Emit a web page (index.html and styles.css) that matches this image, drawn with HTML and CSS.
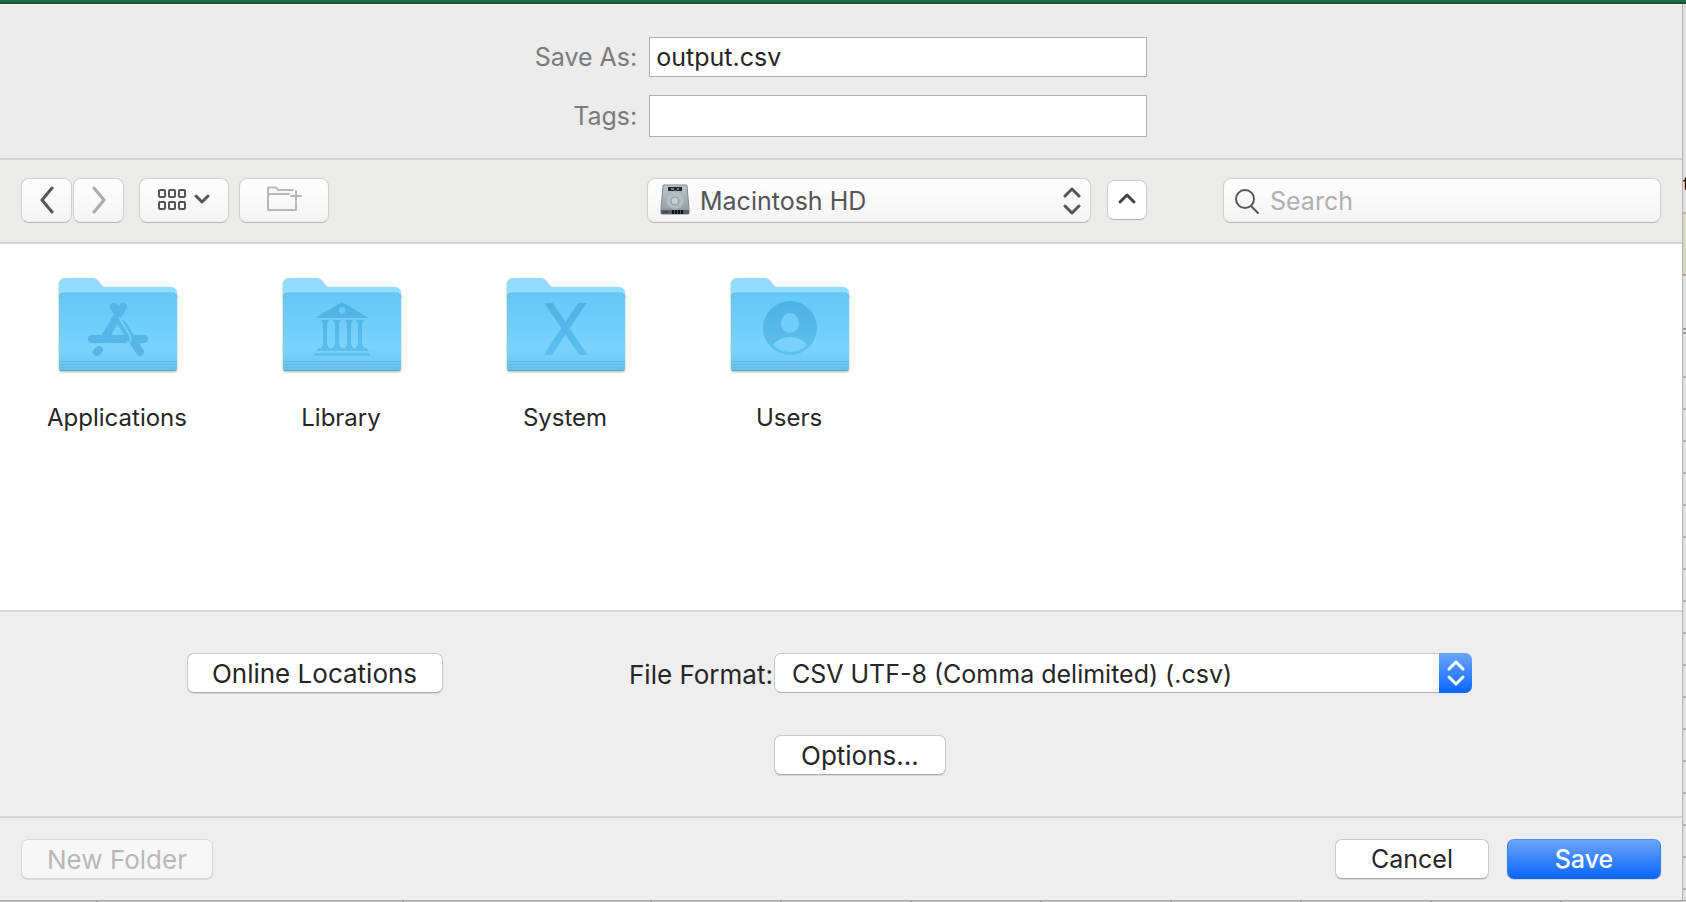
FILE: index.html
```html
<!DOCTYPE html>
<html lang="en">
<head>
    <meta charset="UTF-8">
    <meta name="viewport" content="width=device-width, initial-scale=1.0">
    <title>Save As</title>
    <link rel="stylesheet" href="styles.css">
</head>
<body>

<!-- shared folder shape -->
<svg class="defs" width="0" height="0" aria-hidden="true">
    <defs>
        <linearGradient id="front" x1="0" y1="0" x2="0" y2="1">
            <stop offset="0" stop-color="#66c8f7"/>
            <stop offset="0.25" stop-color="#6acbf9"/>
            <stop offset="0.7" stop-color="#7ad3fd"/>
            <stop offset="0.85" stop-color="#74cdf8"/>
            <stop offset="1" stop-color="#66bfea"/>
        </linearGradient>
        <linearGradient id="glyph" x1="0" y1="0" x2="0" y2="1">
            <stop offset="0" stop-color="#4db1e3"/>
            <stop offset="1" stop-color="#5fc0ee"/>
        </linearGradient>
        <linearGradient id="metal" x1="0" y1="0" x2="0" y2="1">
            <stop offset="0" stop-color="#b9c8cf"/>
            <stop offset="1" stop-color="#8f979a"/>
        </linearGradient>
        <symbol id="folder" viewBox="0 0 120 98">
            <path d="M1 7a6 6 0 0 1 6-6h27c4 0 6 2 8 5 2 3 3 4 6 4h65a6 6 0 0 1 6 6v20H1z" fill="#94dcfd"/>
            <path d="M1 21a5 5 0 0 1 5-5h108a5 5 0 0 1 5 5v70a3 3 0 0 1-3 3H4a3 3 0 0 1-3-3z" fill="url(#front)"/>
            <path d="M1 20a5 5 0 0 1 5-4h108a5 5 0 0 1 5 4" fill="none" stroke="#5fbce9"/>
            <path d="M1 84.500h118M1 87.500h118M1 90.500h118" stroke="#62bbe6"/>
            <path d="M2 93.500h116" stroke="#54a9d6"/>
        </symbol>
    </defs>
</svg>

<div class="workbook">
    <div class="titlebar"></div>

    <form class="dialog" onsubmit="return false">
        <div class="fields">
            <label for="save-as">Save As:</label>
            <input type="text" id="save-as" class="save-as" value="output.csv">
            <label for="tags">Tags:</label>
            <input type="text" id="tags" class="tags">
        </div>

        <div class="toolbar">
            <div class="tools">
                <button type="button" class="tool nav" aria-label="Back">
                    <svg width="16" height="28" viewBox="0 0 16 28"><path d="M13 2L3 14l10 12" stroke="#555" stroke-width="3"/></svg>
                </button>
                <button type="button" class="tool nav" aria-label="Forward">
                    <svg width="16" height="28" viewBox="0 0 16 28"><path d="M3 2l10 12L3 26" stroke="#aaa" stroke-width="3"/></svg>
                </button>
                <button type="button" class="tool view" aria-label="View">
                    <svg width="54" height="24" viewBox="0 0 54 24">
                        <g stroke="#555" stroke-width="2">
                            <rect x="2" y="2" width="6" height="7" rx="1"/><rect x="12" y="2" width="6" height="7" rx="1"/><rect x="22" y="2" width="6" height="7" rx="1"/>
                            <rect x="2" y="14" width="6" height="7" rx="1"/><rect x="12" y="14" width="6" height="7" rx="1"/><rect x="22" y="14" width="6" height="7" rx="1"/>
                        </g>
                        <path d="M39 8l6 6 6-6" stroke="#555" stroke-width="3"/>
                    </svg>
                </button>
                <button type="button" class="tool make" aria-label="New folder here">
                    <svg width="36" height="26" viewBox="0 0 36 26">
                        <path d="M27 4H12L10 1.500H2V24h28v-7M2 10q0-2 3-2h18M30 5v10M25 10h10" stroke="#b8b8b8" stroke-width="2"/>
                    </svg>
                </button>
            </div>

            <div class="location">
                <div class="place">
                    <svg class="disk" width="32" height="34" viewBox="0 0 32 34" aria-hidden="true">
                        <path d="M4 3q0-1 1-1h22q1 0 1 1l2 23v4q0 1-1 1H3q-1 0-1-1v-4z" fill="url(#metal)" stroke="#7d868a"/>
                        <path d="M9 4h14v4H9z" fill="#25292b"/>
                        <path d="M12 6h3M18 6h2" stroke="#c6d5dc"/>
                        <circle cx="16" cy="17" r="9" fill="#b4bdc1" stroke="#a4aeb2"/>
                        <circle cx="16" cy="18" r="4" fill="#c6ced1" stroke="#8e989c"/>
                        <path d="M2 27h28v4H2z" fill="#5b5f61"/>
                        <path d="M14 27v4M17 27v4M20 27v4M23 27v4" stroke="#111" stroke-width="2"/>
                        <path d="M4 29h5" stroke="#333"/>
                    </svg>
                    <select class="place-select" aria-label="Location"><option>Macintosh HD</option></select>
                    <svg class="arrows" width="18" height="28" viewBox="0 0 18 28" aria-hidden="true"><path d="M2 9l7-7 7 7M2 19l7 7 7-7" stroke="#555" stroke-width="3"/></svg>
                </div>
                <button type="button" class="up" aria-label="Collapse">
                    <svg width="20" height="14" viewBox="0 0 20 14"><path d="M3 11l7-7 7 7" stroke="#444" stroke-width="3"/></svg>
                </button>
            </div>

            <div class="search">
                <svg width="26" height="28" viewBox="0 0 26 28" aria-hidden="true"><circle cx="11" cy="12" r="9" stroke="#555" stroke-width="2"/><path d="M17 19l7 7" stroke="#555" stroke-width="2"/></svg>
                <input type="search" placeholder="Search" aria-label="Search">
            </div>
        </div>

        <div class="files">
            <a href="#" class="file">
                <svg class="icon" width="120" height="98" viewBox="0 0 120 98">
                    <use href="#folder"/>
                    <g stroke="#55b6e7" stroke-width="8" stroke-linecap="round">
                        <path d="M56 30l3 5M65 30L46 62M64 47l18 28M34 62h32M77 62h9M41 73l-2 2"/>
                    </g>
                    <path d="M61 40l11 19q2 4-2 8" stroke="#72cefb" stroke-width="2"/>
                </svg>
                <span>Applications</span>
            </a>
            <a href="#" class="file">
                <svg class="icon" width="120" height="98" viewBox="0 0 120 98">
                    <use href="#folder"/>
                    <path fill="url(#glyph)" fill-rule="evenodd" d="M60 25l27 16H33zM60 30a3.500 3.500 0 1 0 .1 0zM39 43h8l-2 4v20l2 4h-8l2-4V47zM51 43h8l-2 4v20l2 4h-8l2-4V47zM63 43h8l-2 4v20l2 4h-8l2-4V47zM74 43h8l-2 4v20l2 4h-8l2-4V47zM36 71h49l2 3H34zM33 76h54l2 3H31z"/>
                </svg>
                <span>Library</span>
            </a>
            <a href="#" class="file">
                <svg class="icon" width="120" height="98" viewBox="0 0 120 98">
                    <use href="#folder"/>
                    <svg x="36" y="26" width="48" height="52" viewBox="0 0 48 52" overflow="hidden">
                        <path d="M4-4l40 60M43-4L3 56" stroke="url(#glyph)" stroke-width="7"/>
                    </svg>
                </svg>
                <span>System</span>
            </a>
            <a href="#" class="file">
                <svg class="icon" width="120" height="98" viewBox="0 0 120 98">
                    <use href="#folder"/>
                    <circle cx="60" cy="51" r="27" fill="url(#glyph)"/>
                    <ellipse cx="60" cy="46" rx="9" ry="10" fill="#70cdfb"/>
                    <path d="M43 68q6-8 17-8t17 8q-7 7-17 7t-17-7z" fill="#78d2fc"/>
                </svg>
                <span>Users</span>
            </a>
        </div>

        <div class="options">
            <button type="button" class="push online">Online Locations</button>
            <label for="format">File Format:</label>
            <div class="format">
                <select id="format"><option>CSV UTF-8 (Comma delimited) (.csv)</option></select>
                <svg class="stepper" width="33" height="40" viewBox="0 0 33 40" aria-hidden="true"><path d="M10 16l7-7 7 7M10 24l7 7 7-7" stroke="#fff" stroke-width="3"/></svg>
            </div>
            <button type="button" class="push more">Options...</button>
        </div>

        <div class="actions">
            <button type="button" class="push new-folder" disabled>New Folder</button>
            <button type="button" class="push wide">Cancel</button>
            <button type="submit" class="push wide save">Save</button>
        </div>
    </form>

    <div class="sheet-right">
        <div class="ribbon">t</div>
        <div class="notice"></div>
        <div class="formula"></div>
        <div class="heading"></div>
        <div class="rows"></div>
    </div>

    <div class="sheet-bottom">
        <i class="first"></i><i class="second"></i><i class="third"></i><i class="rest"></i>
    </div>
</div>

</body>
</html>
```
FILE: styles.css
```css
* {
    box-sizing: border-box;
}
body {
    margin: 0;
    font-family: Inter, "Liberation Sans", sans-serif;
    font-size: 25px;
    color: #262626;
}
svg {
    display: block;
    fill: none;
    stroke-linecap: round;
    stroke-linejoin: round;
}
.defs {
    position: absolute;
}
button,
input,
select {
    font: inherit;
    color: inherit;
    margin: 0;
    outline: none;
}
.workbook {
    display: grid;
    grid-template-columns: 1fr 4px;
    grid-template-rows: 4px 1fr 2px;
    min-height: 100vh;
}
.titlebar {
    grid-column: 1 / 3;
    background: linear-gradient(#1f6b43 50%, #185634 50%);
}
.dialog {
    display: flex;
    flex-direction: column;
    background-color: #eeeeee;
}

/* name and tags */
.fields {
    display: grid;
    grid-template-columns: auto 498px;
    justify-content: center;
    align-items: center;
    gap: 18px 12px;
    padding: 33px 0 21px;
    background-color: #ececec;
    border-bottom: 2px solid #d3d3d3;
}
.fields label {
    text-align: right;
    color: #7b7b7b;
}
.fields input {
    height: 40px;
    padding: 0 6px;
    border: 1px solid #b1b1b1;
    background-color: #fff;
}
.fields .tags {
    height: 42px;
}

/* toolbar */
.toolbar {
    display: grid;
    grid-template-columns: 1fr 500px 438px;
    column-gap: 76px;
    padding: 18px 21px 19px;
    background-color: #ebebea;
    border-bottom: 2px solid #d3d3d3;
}
.tools {
    display: flex;
    margin-right: -76px;
}
.tool,
.place,
.search {
    height: 45px;
    border: 1px solid #d0d0d0;
    border-bottom-color: #b5b5b5;
    border-radius: 8px;
    background: linear-gradient(#fefefe, #f4f4f4);
}
.tool {
    display: flex;
    justify-content: center;
    align-items: center;
    padding: 0 0 1px;
}
.nav {
    width: 51px;
    margin-right: 1px;
}
.view {
    width: 90px;
    margin-left: 14px;
}
.make {
    width: 90px;
    margin-left: 10px;
    padding-bottom: 4px;
}
.location {
    display: flex;
    justify-content: space-between;
    align-items: center;
}
.place {
    position: relative;
    width: 444px;
}
.place-select {
    width: 100%;
    height: 100%;
    padding: 0 52px;
    border: none;
    background: none;
    appearance: none;
    color: #555;
}
.disk {
    position: absolute;
    top: 4px;
    left: 11px;
    stroke-linecap: butt;
}
.arrows {
    position: absolute;
    top: 8px;
    right: 9px;
}
.up {
    display: flex;
    justify-content: center;
    align-items: center;
    width: 40px;
    height: 40px;
    margin-bottom: 2px;
    padding: 0 0 3px;
    border: 1px solid #cccccc;
    border-bottom-color: #b3b3b3;
    border-radius: 7px;
    background-color: #fff;
}
.search {
    display: flex;
    align-items: center;
    padding-left: 10px;
}
.search input {
    flex: 1;
    min-width: 0;
    margin-left: 10px;
    padding: 0;
    border: none;
    background: none;
    appearance: none;
}
.search input::placeholder {
    color: #b0b0b0;
}

/* files */
.files {
    flex: 1;
    display: flex;
    flex-wrap: wrap;
    align-content: flex-start;
    padding: 33px 5px;
    background-color: #fff;
    border-bottom: 2px solid #d8d8d8;
}
.file {
    display: flex;
    flex-direction: column;
    align-items: center;
    width: 224px;
    font-size: 24px;
    line-height: 28px;
    color: #262626;
    text-decoration: none;
}
.icon {
    margin: 0 0 29px 2px;
    filter: drop-shadow(0 1px 1px rgba(0, 0, 0, 0.3));
    stroke-linecap: butt;
}

/* format options */
.options {
    display: grid;
    grid-template-columns: 629px auto 1fr;
    align-items: center;
    row-gap: 42px;
    padding: 41px 0;
    border-bottom: 2px solid #d6d6d6;
}
.options label {
    padding-top: 2px;
}
.push {
    height: 40px;
    padding: 0 20px;
    border: 1px solid #c8c8c8;
    border-bottom-color: #adadad;
    border-radius: 7px;
    background-color: #fff;
    box-shadow: 0 1px 1px rgba(0, 0, 0, 0.1);
}
.online {
    justify-self: center;
    width: 256px;
}
.options,
.new-folder {
    font-size: 26px;
}
.format {
    position: relative;
    width: 698px;
    margin-left: 1px;
}
.format select {
    display: block;
    width: 100%;
    height: 40px;
    padding: 2px 40px 0 17px;
    border: 1px solid #c8c8c8;
    border-bottom-color: #adadad;
    border-radius: 7px;
    background-color: #fff;
    font-size: 25px;
    appearance: none;
}
.stepper {
    position: absolute;
    top: 0;
    right: 0;
    border-radius: 0 7px 7px 0;
    background: linear-gradient(#6aa5fc, #0a66ff);
    pointer-events: none;
}
.more {
    grid-column: 3;
    justify-self: start;
    width: 172px;
    margin-left: 1px;
}

/* bottom buttons */
.actions {
    display: flex;
    gap: 18px;
    padding: 21px;
}
.new-folder {
    width: 192px;
    margin-right: auto;
    color: #b9b9b9;
    background-color: #f7f7f7;
    border-color: #d9d9d9;
}
.wide {
    width: 154px;
}
.save {
    border-color: #4a8ef5 #2f7cf5 #0a61ee;
    background: linear-gradient(#6ba5fb, #0a66ff);
    color: #fff;
    font-weight: 500;
}

/* spreadsheet showing round the dialog */
.sheet-right {
    display: flex;
    flex-direction: column;
    overflow: hidden;
    background-color: #dfdfdf;
    border-left: 1px solid #b4b4b4;
}
.ribbon {
    height: 210px;
    padding-top: 166px;
    border-bottom: 2px solid #b9b9b9;
    font-size: 20px;
    line-height: 28px;
    color: #111;
}
.notice {
    height: 62px;
    background-color: #dcd6c0;
    border-bottom: 2px solid #a5a5a5;
}
.formula {
    height: 52px;
}
.heading {
    height: 48px;
    border-top: 6px double #999;
}
.rows {
    flex: 1;
    background: repeating-linear-gradient(#b2b2b2 0 2px, #dfdfdf 2px 32px);
}
.sheet-bottom {
    grid-column: 1 / 3;
    display: flex;
    overflow: hidden;
    background-color: #c6c6c6;
    border-top: 1px solid #a9a9a9;
}
.sheet-bottom i {
    flex-shrink: 0;
    border-right: 2px solid #999;
}
.first {
    width: 98px;
}
.second {
    width: 306px;
}
.third {
    width: 248px;
}
.sheet-bottom .rest {
    flex: 1;
    border: none;
    background: repeating-linear-gradient(90deg, transparent 0 128px, #999 128px 130px);
}
```
